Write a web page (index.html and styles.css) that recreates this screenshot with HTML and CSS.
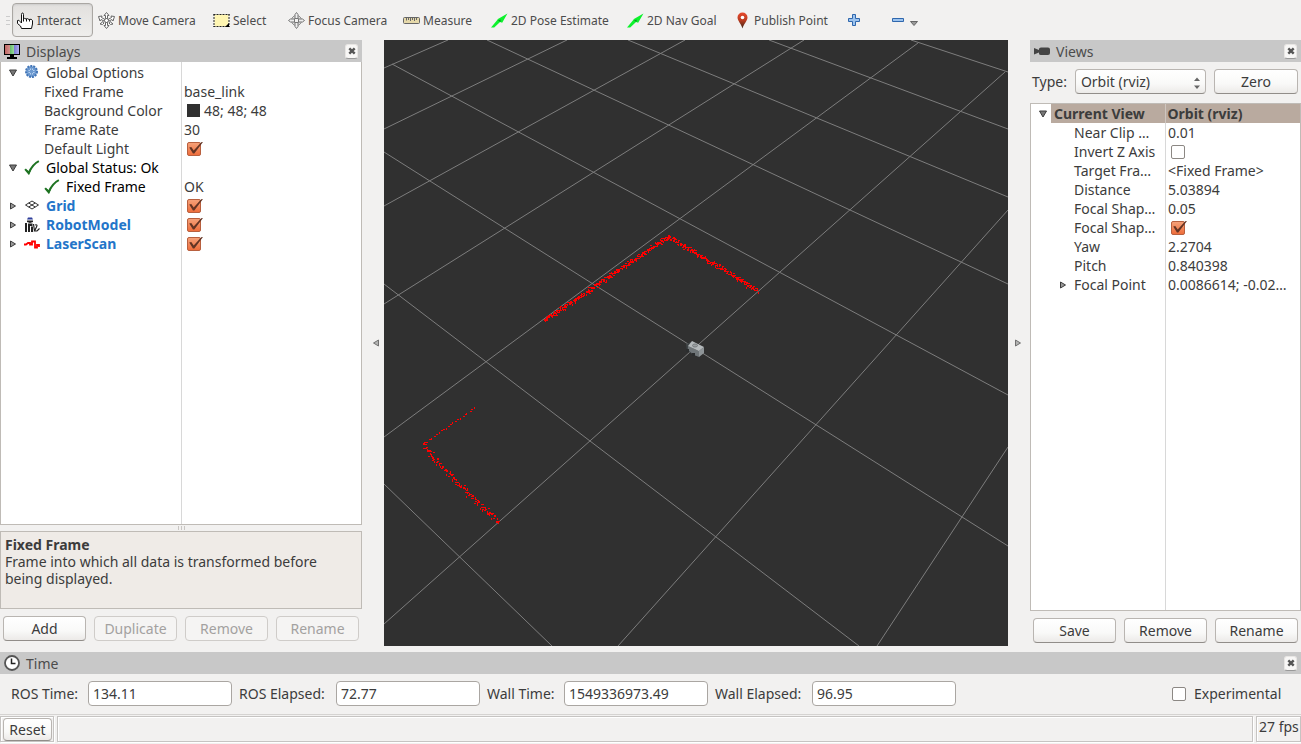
FILE: index.html
```html
<!DOCTYPE html>
<html lang="en">
<head>
<meta charset="utf-8">
<title>RViz</title>
<link rel="stylesheet" href="styles.css">
</head>
<body>
<svg class="defs" aria-hidden="true">
  <symbol id="arrow" viewBox="0 0 16 16"><path d="M0 14.500L5.500 8L6.500 6.500L15.500 1.500L10.500 10L8.500 9.500L3 14.500Z" fill="#0df22d"/><path d="M6.500 8L9 7L9 9.500" fill="#07991b"/></symbol>
  <symbol id="close" viewBox="0 0 8 8"><path d="M1.300 1.300L6.700 6.700M6.700 1.300L1.300 6.700" stroke="#555" stroke-width="2.400"/></symbol>
  <symbol id="tick" viewBox="0 0 14 14"><path d="M1 8L4 11.500C6 7 9 3 13 1" fill="none" stroke="#1e7322" stroke-width="1.800"/><path d="M2 8L4.500 13L7 7.500L4.500 10Z" fill="#1e7322"/></symbol>
  <symbol id="open" viewBox="0 0 8 8"><path d="M.5 1H7.500L4 7Z" fill="#777" stroke="#3c3c3c"/></symbol>
  <symbol id="shut" viewBox="0 0 8 8"><path d="M1.500 1V7L6.500 4Z" fill="#999" stroke="#3c3c3c"/></symbol>
</svg>

<nav class="toolbar" aria-label="Tools">
  <span class="grip"></span>
  <button class="tool active"><svg viewBox="0 0 17 17"><path d="M4.500 10V2.500Q4.500 1 5.500 1T6.500 2.500V7Q7.500 5.700 9 7Q10.500 6 12 7.500Q14.500 6.500 15.500 8.500V12L14.500 16.500H4.500L3.500 14L.5 11.500V8.500Q2 7.500 3 9.500L4.500 11Z" fill="#fff" stroke="#111"/><path d="M6.500 7V9.500M9.500 7V9.500M12.500 8V9.500" stroke="#111"/></svg>Interact</button>
  <button class="tool move"><svg viewBox="0 0 17 17"><g fill="#fff" stroke="#666"><path d="M8.500.5L11 3.500H9.500V6.500H7.500V3.500H6ZM8.500 16.500L11 13.500H9.500V10.500H7.500V13.500H6ZM.5 4.500L4 4L3.500 5.500L7 7.500L6 9L3 7.500L2 9ZM16.500 4.500L13 4L13.500 5.500L10 7.500L11 9L14 7.500L15 9ZM2 12L5 9.500L6 11L4.500 12.500ZM15 12L12 9.500L11 11L12.500 12.500Z"/><circle cx="8.500" cy="8.500" r="2"/></g></svg>Move Camera</button>
  <button class="tool select"><svg viewBox="0 0 17 17"><path d="M1.500 2.500H15.500V14.500H1.500Z" fill="#fff6b2"/><path d="M.5 2.500H16.500M.5 14.500H16.500M1 2V15M16 2V15" fill="none" stroke="#222" stroke-dasharray="2 1"/><path d="M16 11V15H12Z" fill="#000"/></svg>Select</button>
  <button class="tool focus"><svg viewBox="0 0 17 17"><g fill="none" stroke="#888"><circle cx="8.500" cy="8.500" r="5"/><circle cx="8.500" cy="8.500" r="3"/></g><path d="M8.500.5L10 2.500V6.500H7V2.500ZM8.500 16.500L10 14.500V10.500H7V14.500ZM.5 8.500L2.500 7H6.500V10H2.500ZM16.500 8.500L14.500 7H10.500V10H14.500Z" fill="#eee" stroke="#777"/></svg>Focus Camera</button>
  <button class="tool measure"><svg viewBox="0 0 17 17"><rect x=".5" y="5.500" width="16" height="6" rx="1" fill="#e6d9aa" stroke="#666"/><path d="M3.500 6V8.500M5.500 6V8M7.500 6V9M9.500 6V8M11.500 6V9M13.500 6V8" stroke="#666"/></svg>Measure</button>
  <button class="tool pose"><svg><use href="#arrow"/></svg>2D Pose Estimate</button>
  <button class="tool nav"><svg><use href="#arrow"/></svg>2D Nav Goal</button>
  <button class="tool point"><svg viewBox="0 0 17 17"><defs><linearGradient id="pin" x2="0" y2="1"><stop stop-color="#e7492d"/><stop offset=".5" stop-color="#b83b20"/><stop offset="1" stop-color="#3a2517"/></linearGradient></defs><path d="M8.500 16.500C7.500 12 3.500 9 3.500 5.500A5 5 0 0 1 13.500 5.500C13.500 9 9.500 12 8.500 16.500Z" fill="url(#pin)"/><circle cx="8.500" cy="5.500" r="1.800" fill="#fff"/></svg>Publish Point</button>
  <button class="tool plus" aria-label="Add tool"><svg viewBox="0 0 14 14"><path d="M5.500 1.500H8.500V5.500H12.500V8.500H8.500V12.500H5.500V8.500H1.500V5.500H5.500Z" fill="#9cc3ee" stroke="#2f67ad"/></svg></button>
  <button class="tool minus" aria-label="Remove tool"><svg viewBox="0 0 14 14"><path d="M1.500 5.500H12.500V8.500H1.500Z" fill="#9cc3ee" stroke="#2f67ad"/></svg><svg class="drop" viewBox="0 0 8 8"><path d="M.5 3.500H7.500L4 7.500Z" fill="#999" stroke="#666"/></svg></button>
</nav>

<main class="workspace">
  <section class="dock displays">
    <header class="dock-title"><svg viewBox="0 0 18 18"><defs><linearGradient id="rgb"><stop stop-color="#bd6260"/><stop offset=".35" stop-color="#d3908c"/><stop offset=".35" stop-color="#63b869"/><stop offset=".65" stop-color="#9cdf9e"/><stop offset=".65" stop-color="#7b7bd3"/><stop offset="1" stop-color="#b4b4f0"/></linearGradient></defs><rect x="1.500" y="2.500" width="15" height="10" fill="url(#rgb)" stroke="#000"/><path d="M7 13H11V15H14V17H4V15H7Z"/></svg><h2>Displays</h2><button class="close" aria-label="Close"><svg><use href="#close"/></svg></button></header>
    <div class="tree left-tree">
      <table>
        <tr><td><div class="cell"><svg class="exp"><use href="#open"/></svg><svg class="icon" viewBox="0 0 16 16"><circle cx="7.500" cy="6.500" r="5.500" fill="#83afe0" stroke="#4375b6" stroke-width="2" stroke-dasharray="2 1"/><circle cx="7.500" cy="6.500" r="4" fill="#b4d0f0" stroke="#4b7fc0"/><path d="M7.500 2V11M3 6.500H12M4.500 3.500L10.500 9.500M10.500 3.500L4.500 9.500" stroke="#6d9ad0"/></svg>Global Options</div></td><td></td></tr>
        <tr><td class="child">Fixed Frame</td><td>base_link</td></tr>
        <tr><td class="child">Background Color</td><td><div class="value"><span class="swatch"></span>48; 48; 48</div></td></tr>
        <tr><td class="child">Frame Rate</td><td>30</td></tr>
        <tr><td class="child"><label for="light">Default Light</label></td><td><div class="value"><input type="checkbox" id="light" checked></div></td></tr>
        <tr class="status"><td><div class="cell"><svg class="exp"><use href="#open"/></svg><svg class="icon"><use href="#tick"/></svg>Global Status: Ok</div></td><td></td></tr>
        <tr class="status"><td><div class="cell nested"><svg class="icon"><use href="#tick"/></svg>Fixed Frame</div></td><td class="plain">OK</td></tr>
        <tr class="display"><td><div class="cell"><svg class="exp"><use href="#shut"/></svg><svg class="icon" viewBox="0 0 16 16"><path d="M1.500 7L8 3L14.500 7L8 11ZM4.700 5L11.200 9M11.200 5L4.700 9" fill="none" stroke="#333"/></svg><label for="grid">Grid</label></div></td><td><div class="value"><input type="checkbox" id="grid" checked></div></td></tr>
        <tr class="display"><td><div class="cell"><svg class="exp"><use href="#shut"/></svg><svg class="icon" viewBox="0 0 16 16"><path d="M4 .5H8L9 2.500H3Z" fill="#2d3c9a"/><path d="M3 3.500H9V5L6 6L3 5ZM1 6H3V15H1ZM4 6.500H8.500V9H6V15H4ZM7 9.500H9V15H7Z" fill="#222"/><path d="M9.500 7L10.500 14M11 8Q14 7 12.500 10L10.500 14H13L15.500 11.500" fill="none" stroke="#222" stroke-width="1.200"/></svg><label for="robot">RobotModel</label></div></td><td><div class="value"><input type="checkbox" id="robot" checked></div></td></tr>
        <tr class="display"><td><div class="cell"><svg class="exp"><use href="#shut"/></svg><svg class="icon" viewBox="0 0 16 16"><path d="M0 8.500H2L4 7H6V8.500H8V5.500H11V11.500H13V9H15V11" fill="none" stroke="#f00" stroke-width="1.800"/></svg><label for="laser">LaserScan</label></div></td><td><div class="value"><input type="checkbox" id="laser" checked></div></td></tr>
      </table>
    </div>
    <div class="splitter"></div>
    <div class="help"><b>Fixed Frame</b><br>Frame into which all data is transformed before being displayed.</div>
    <div class="buttons"><button class="push">Add</button><button class="push" disabled>Duplicate</button><button class="push" disabled>Remove</button><button class="push" disabled>Rename</button></div>
  </section>

  <button class="collapse back" aria-label="Hide left panel"><svg><use href="#shut"/></svg></button>
  <section class="viewport" aria-label="3D view">
    <svg viewBox="0 0 624 606" preserveAspectRatio="xMidYMid slice">
      <path class="grid-lines" d="M527 0L624 32M385 0L624 89M244 0L624 157M103 0L624 244M8 24L624 355M0 112L624 506M0 244L475 606M0 444L168 606M0 28L64 0M0 89L183 0M0 166L301 0M0 264L420 0M0 397L534 3M0 584L621 32M234 606L624 170M493 606L624 407"/>
      <path id="scan" class="scan"/>
      <path d="M302 304L307 302L312 306L312 316L303 311Z" fill="#3f4446"/>
      <path d="M304 306L315 311V317L310 315L304 310Z" fill="#6f7578"/>
      <path d="M315 311L320 307V313L315 317Z" fill="#8f9598"/>
      <path d="M304 306L308 301L320 307L315 311Z" fill="#b4b9bb"/>
      <path d="M302 309H305V312H302ZM308 313H311V316H308Z" fill="#2b2d2e"/>
      <ellipse cx="311" cy="305.500" rx="2.500" ry="1.500" fill="#9a9fa1" stroke="#777c7f"/>
    </svg>
  </section>
  <button class="collapse" aria-label="Hide right panel"><svg><use href="#shut"/></svg></button>

  <section class="dock views">
    <header class="dock-title"><svg viewBox="0 0 18 18"><path d="M1 6L6 8V7Q6 5.500 8 5.500H15Q17 5.500 17 7.500V11Q17 13 15 13H8Q6 13 6 11.500V10.500L1 12.500Z" fill="#444"/></svg><h2>Views</h2><button class="close" aria-label="Close"><svg><use href="#close"/></svg></button></header>
    <div class="type-row"><label for="type">Type:</label><span class="combo"><select id="type"><option>Orbit (rviz)</option></select><svg viewBox="0 0 8 14"><path d="M1 5L4 1.500L7 5ZM1 9.500L4 13L7 9.500Z" fill="#666"/></svg></span><button class="push">Zero</button></div>
    <div class="tree right-tree">
      <table>
        <tr class="current"><td><div class="cell"><svg class="exp"><use href="#open"/></svg><span>Current View</span></div></td><td>Orbit (rviz)</td></tr>
        <tr><td class="child">Near Clip …</td><td>0.01</td></tr>
        <tr><td class="child"><label for="invert">Invert Z Axis</label></td><td><div class="value"><input type="checkbox" id="invert"></div></td></tr>
        <tr><td class="child">Target Fra…</td><td>&lt;Fixed Frame&gt;</td></tr>
        <tr><td class="child">Distance</td><td>5.03894</td></tr>
        <tr><td class="child">Focal Shap…</td><td>0.05</td></tr>
        <tr><td class="child"><label for="shape">Focal Shap…</label></td><td><div class="value"><input type="checkbox" id="shape" checked></div></td></tr>
        <tr><td class="child">Yaw</td><td>2.2704</td></tr>
        <tr><td class="child">Pitch</td><td>0.840398</td></tr>
        <tr><td><div class="cell nested"><svg class="exp"><use href="#shut"/></svg>Focal Point</div></td><td>0.0086614; -0.02…</td></tr>
      </table>
    </div>
    <div class="buttons"><button class="push">Save</button><button class="push">Remove</button><button class="push">Rename</button></div>
  </section>
</main>

<section class="time">
  <header class="dock-title"><svg viewBox="0 0 18 18"><circle cx="9" cy="9" r="7" fill="#fff" stroke="#555" stroke-width="1.800"/><path d="M8.500 4.500V9.500H12.500" fill="none" stroke="#222" stroke-width="1.500"/></svg><h2>Time</h2><button class="close" aria-label="Close"><svg><use href="#close"/></svg></button></header>
  <form class="clock">
    <label class="short" for="rt">ROS Time:</label><input type="text" id="rt" value="134.11">
    <label class="long" for="re">ROS Elapsed:</label><input type="text" id="re" value="72.77">
    <label class="short" for="wt">Wall Time:</label><input type="text" id="wt" value="1549336973.49">
    <label class="long" for="we">Wall Elapsed:</label><input type="text" id="we" value="96.95">
    <label class="experimental"><input type="checkbox">Experimental</label>
  </form>
</section>
<footer class="statusbar"><div class="slot"><button class="push reset">Reset</button></div><div class="slot message"></div><div class="slot fps">27 fps</div></footer>
<script src="scan.js"></script>
</body>
</html>
```

FILE: styles.css
```css
* { box-sizing: border-box; }
body { margin: 0; height: 100vh; display: flex; flex-direction: column; background: #f2f1f0; color: #3c3c3c; font: 14px/19px "Noto Sans", "Open Sans", sans-serif; overflow: hidden; }
button, input, select { font: inherit; color: inherit; margin: 0; }
svg { display: block; flex: none; }
.defs { position: absolute; width: 0; height: 0; }

.toolbar { display: flex; align-items: center; height: 40px; padding-left: 6px; color: #4c4c4c; font-size: 12px; flex: none; }
.grip { width: 4px; height: 9px; margin-right: 2px; background: repeating-linear-gradient(#ccc 0 1px, transparent 1px 4px); }
.tool { display: flex; align-items: center; gap: 3px; height: 34px; padding: 0 4px; border: 1px solid transparent; border-radius: 4px; background: none; white-space: nowrap; }
.tool svg { width: 17px; height: 17px; }
.tool.active { width: 81px; border-color: #aaa7a3; background: linear-gradient(#e2e0de, #efeeec); box-shadow: inset 0 1px 2px #ccc; }
.move { width: 115px; }
.select { width: 75px; }
.focus { width: 115px; }
.measure { width: 88px; }
.pose { width: 136px; }
.nav { width: 107px; }
.point { width: 113px; }
.plus { width: 44px; }
.tool.plus svg, .tool.minus svg { width: 14px; height: 14px; }
.tool.minus { gap: 5px; }
.tool.minus .drop { width: 8px; height: 8px; margin-top: 4px; }

.workspace { flex: 1; min-height: 0; display: flex; padding-bottom: 6px; }
.dock { display: flex; flex-direction: column; }
.displays { width: 362px; }
.views { width: 271px; }
.workspace > .displays { margin-bottom: 5px; }
.workspace > .views { margin-bottom: 3px; }
.dock-title { display: flex; align-items: center; gap: 5px; height: 22px; padding: 0 4px 0 3px; background: #c8c8c8; flex: none; }
.dock-title > svg { width: 18px; height: 18px; }
.dock-title h2 { flex: 1; margin: 0; font-size: 14px; font-weight: 400; color: #4c4c4c; }
.close { display: grid; place-items: center; width: 13px; height: 15px; padding: 0; border: 1px solid #e8e6e4; border-bottom-color: #999; border-radius: 3px; background: #f8f7f6; }
.close svg { width: 8px; height: 8px; }

.tree { flex: 1; min-height: 0; border: 1px solid #bfbbb6; background: #fff; }
.left-tree { border-top: 0; background: linear-gradient(90deg, transparent 180px, #d8d8d8 180px 181px, transparent 181px) #fff; }
.right-tree { background: linear-gradient(90deg, transparent 134px, #d8d8d8 134px 135px, transparent 135px) #fff; }
.tree table { width: 100%; border-collapse: collapse; table-layout: fixed; }
.tree tr { height: 19px; }
.left-tree table { margin-top: 1px; }
.tree td { height: 19px; padding: 0; white-space: nowrap; overflow: hidden; }
.tree td + td { padding-left: 3px; }
.left-tree td:first-child { width: 180px; }
.right-tree td:first-child { width: 134px; }
.left-tree .child, .right-tree .child { padding-left: 43px; }
.cell, .value { display: flex; align-items: center; height: 19px; }
.cell { padding-left: 8px; }
.exp { width: 8px; height: 8px; }
.icon { width: 16px; height: 16px; margin: 0 6px 0 7px; }
.cell.nested { padding-left: 36px; }
.status td:first-child { color: #000; }
.display td:first-child { color: #2375c9; font-weight: 700; }
.value { gap: 4px; padding-left: 3px; }
.swatch { width: 13px; height: 13px; background: #303030; }
.current { font-weight: 700; }
.current td:last-child { background: #b9aa9f; border-left: 1px solid #cfc6bf; padding-left: 2px; }
.current span { flex: 1; margin-left: 4px; padding-left: 3px; background: #b9aa9f; }
.right-tree .cell.nested { padding-left: 28px; gap: 7px; }

input[type="checkbox"] { appearance: none; position: relative; width: 14px; height: 14px; border: 1px solid #8c8884; border-radius: 2px; background: #fff; flex: none; }
input[type="checkbox"]:checked { border-color: #b8603f; background: linear-gradient(#f5a078, #ef6e3c); }
input[type="checkbox"]:checked::after { content: ""; position: absolute; left: 0; top: -1px; width: 15px; height: 13px; background: #633424; clip-path: polygon(8% 46%, 22% 42%, 38% 70%, 88% 5%, 100% 3%, 42% 92%, 33% 92%); }

.splitter { height: 6px; flex: none; background: repeating-linear-gradient(90deg, #c9c6c3 0 1px, transparent 1px 3px) center / 7px 4px no-repeat; }
.help { height: 78px; padding: 4px; border: 1px solid #bfbbb6; background: #efebe7; line-height: 17px; flex: none; }
.buttons { display: flex; gap: 8px; padding: 7px 3px 0; flex: none; }
.push { flex: 1; min-width: 0; height: 25px; padding: 0; border: 1px solid #b9b5b1; border-bottom-color: #918d89; border-radius: 4px; background: linear-gradient(#fff, #f9f9f8 60%, #eceae8); line-height: 21px; }
.push:disabled { color: #a3a1a0; border-color: #cfccc9; background: #f5f4f3; }

.collapse { width: 22px; padding: 0 0 0 6px; border: 0; background: none; }
.collapse.back { transform: scaleX(-1); padding-left: 4px; }
.collapse svg { width: 8px; height: 8px; opacity: .7; }
.viewport { flex: 1; min-width: 0; background: #303030; overflow: hidden; }
.viewport svg { width: 100%; height: 100%; }
.grid-lines { fill: none; stroke: #7d7d7d; }
.scan { fill: #f00; shape-rendering: crispEdges; }

.type-row { display: flex; align-items: center; gap: 8px; height: 41px; padding: 0 3px 3px 2px; flex: none; }
.combo { position: relative; width: 131px; }
.combo select { appearance: none; display: block; width: 100%; height: 25px; padding: 0 5px; border: 1px solid #b9b5b1; border-bottom-color: #918d89; border-radius: 4px; background: linear-gradient(#fff, #f9f9f8 60%, #eceae8); }
.combo svg { position: absolute; right: 5px; top: 7px; width: 8px; height: 14px; pointer-events: none; }

.time { flex: none; }
.clock { display: flex; align-items: center; gap: 7px; height: 40px; padding: 0 16px 1px 11px; white-space: nowrap; }
.clock input[type="text"] { width: 144px; height: 25px; padding: 0 4px; border: 1px solid #aaa6a2; border-radius: 4px; background: #fff; }
.short { width: 70px; }
.long { width: 90px; }
.experimental { display: flex; align-items: center; gap: 8px; width: 113px; margin-left: auto; }
.statusbar { display: flex; gap: 3px; height: 30px; padding-bottom: 1px; border-top: 1px solid #d5d3d1; flex: none; }
.slot { border: 1px solid #c6c4c2; box-shadow: 1px 1px #fff, inset 1px 1px #fff; margin: 1px 0; }
.slot:first-child { width: 54px; padding: 1px 1px 0 2px; }
.message { flex: 1; }
.fps { width: 45px; padding-left: 2px; white-space: nowrap; }
.reset { width: 100%; height: 23px; }
```

FILE: scan.js
```js
// Walls seen by the laser: [x1, y1, x2, y2, samples, noise]
const walls = [
  [160, 280, 284, 196, 270, 3],
  [284, 196, 373, 250, 190, 3],
  [90, 367, 40, 403, 22, 1],
  [39, 404, 53, 422, 28, 4],
  [53, 422, 84, 453, 50, 4],
  [84, 453, 113, 481, 50, 4]
];
let seed = 48271;
const random = () => (seed = (seed * 16807) % 2147483647) / 2147483647;
let d = "";
for (const [x1, y1, x2, y2, samples, noise] of walls) {
  for (let i = 0; i < samples; i++) {
    const t = i / (samples - 1);
    const spread = (random() + random() - 1) * noise;
    const x = Math.round(x1 + (x2 - x1) * t + (random() - 0.5) * noise);
    const y = Math.round(y1 + (y2 - y1) * t + spread);
    d += i % 3 ? `M${x} ${y}h2v1h-2z` : `M${x} ${y}h1v2h-1z`;
  }
}
document.getElementById("scan").setAttribute("d", d);
```
